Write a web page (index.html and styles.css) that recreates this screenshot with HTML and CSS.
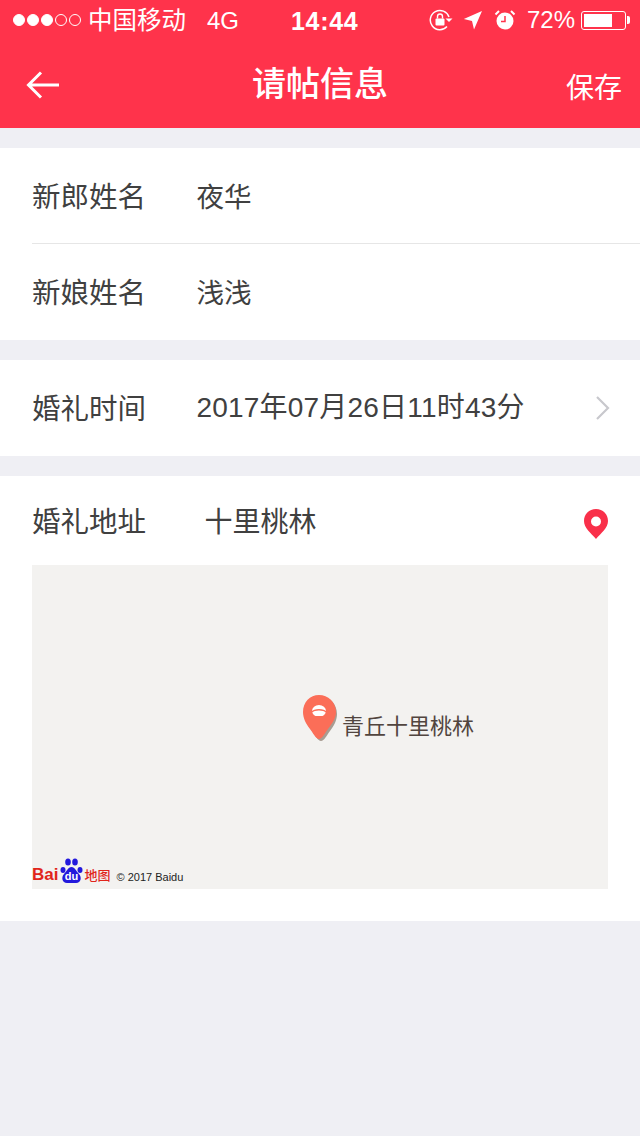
FILE: index.html
```html
<!DOCTYPE html>
<html lang="zh-CN">
<head>
    <meta charset="UTF-8">
    <meta name="viewport" content="width=device-width, initial-scale=1.0">
    <title>请帖信息</title>
    <link rel="stylesheet" href="styles.css">
</head>
<body>
    <header class="topbar">
        <div class="statusbar">
            <div class="status-left">
                <span class="signal">
                    <i class="dot on"></i><i class="dot on"></i><i class="dot on"></i><i class="dot"></i><i class="dot"></i>
                </span>
                <span class="carrier">中国移动</span>
                <span class="network">4G</span>
            </div>
            <div class="clock">14:44</div>
            <div class="status-right">
                <svg class="ico-lock" width="24" height="22" viewBox="0 0 24 22">
                    <path d="M18 17.5A9.6 9.6 0 1 1 20 8" fill="none" stroke="#fff" stroke-width="1.5"/>
                    <path d="M16.5 9.5h7L20 13z" fill="#fff"/>
                    <rect x="6.5" y="9.5" width="9" height="7" rx="1" fill="#fff"/>
                    <path d="M8.5 9.5V7.500a2.500 2.500 0 0 1 5 0v2" fill="none" stroke="#fff" stroke-width="1.400"/>
                </svg>
                <svg class="ico-loc" width="20" height="20" viewBox="0 0 20 20">
                    <path d="M19 1 11 19.500 9 11 .8 9z" fill="#fff"/>
                </svg>
                <svg class="ico-alarm" width="22" height="22" viewBox="0 0 22 22">
                    <circle cx="11" cy="12" r="8.500" fill="#fff"/>
                    <path d="M11 7v5.500H7" fill="none" stroke="#ff334b" stroke-width="1.500"/>
                    <path d="M1.500 5.500 5 2M20.500 5.500 17 2" stroke="#fff" stroke-width="2" fill="none"/>
                </svg>
                <span class="percent">72%</span>
                <span class="battery"><span class="battery-level"></span></span>
                <span class="battery-cap"></span>
            </div>
        </div>
        <nav class="navbar">
            <svg class="back" width="34" height="30" viewBox="0 0 34 30">
                <path d="M33 15H3M15 2.500 2.500 15 15 27.500" fill="none" stroke="#fff" stroke-width="3"/>
            </svg>
            <h1>请帖信息</h1>
            <span class="save">保存</span>
        </nav>
    </header>

    <section class="group">
        <div class="row line">
            <span class="label">新郎姓名</span>
            <span class="value">夜华</span>
        </div>
        <div class="row">
            <span class="label">新娘姓名</span>
            <span class="value">浅浅</span>
        </div>
    </section>

    <section class="group">
        <div class="row">
            <span class="label">婚礼时间</span>
            <span class="value date">2017年07月26日11时43分</span>
            <svg class="arrow" width="16" height="26" viewBox="0 0 16 26">
                <path d="M2 2l11 11L2 24" fill="none" stroke="#c8c8cd" stroke-width="2.200"/>
            </svg>
        </div>
    </section>

    <section class="group address">
        <div class="address-head">
            <span class="label">婚礼地址</span>
            <span class="value place">十里桃林</span>
            <svg class="pin" width="24" height="30" viewBox="0 0 24 30">
                <path fill-rule="evenodd" d="M12 0C5 0 0 5 0 12c0 7 7 12 12 18 5-6 12-11 12-18C24 5 19 0 12 0zm0 7.500a5 5 0 1 1 0 10 5 5 0 0 1 0-10z" fill="#f9304a"/>
            </svg>
        </div>
        <div class="map">
            <div class="marker">
                <svg width="36" height="46" viewBox="0 0 36 46">
                    <path d="M19 2C10 2 3 9 3 19c0 6 3 12 7 17 3 4 6 10 9 10s6-6 9-10c4-5 7-11 7-17C35 9 28 2 19 2z" fill="#a89c92"/>
                    <path d="M17 0C8 0 1 7 1 17c0 6 3 12 7 17 3 4 6 10 9 10s6-6 9-10c4-5 8-11 8-17C34 7 26 0 17 0z" fill="#fb6e58"/>
                    <ellipse cx="17" cy="16" rx="7" ry="6" fill="#fff"/>
                    <path d="M10 17a7.500 3.500 0 0 1 14 0" fill="none" stroke="#fb6e58" stroke-width="1.500"/>
                    <path d="M8 22h18v-3a9 2 0 0 1-18 0z" fill="#fb6e58"/>
                </svg>
                <span class="marker-name">青丘十里桃林</span>
            </div>
            <div class="map-logo">
                <span class="bai">Bai</span>
                <svg class="paw" width="26" height="27" viewBox="0 0 26 27">
                    <ellipse cx="5" cy="13" rx="2.500" ry="3" fill="#2319dc"/>
                    <ellipse cx="10" cy="5" rx="2.800" ry="3.500" fill="#2319dc"/>
                    <ellipse cx="17" cy="5" rx="2.800" ry="3.500" fill="#2319dc"/>
                    <ellipse cx="22" cy="13" rx="2.500" ry="3" fill="#2319dc"/>
                    <path d="M13.500 10C10 10 9 14 6 17c-3 3-2 9 3 9h9c5 0 6-6 3-9-3-3-4-7-7.500-7z" fill="#2319dc"/>
                    <text class="paw-du" x="13.500" y="23" text-anchor="middle">du</text>
                </svg>
                <span class="map-cn">地图</span>
                <span class="copyright">© 2017 Baidu</span>
            </div>
        </div>
    </section>
</body>
</html>
```

FILE: styles.css
```css
*{
    margin: 0;
    padding: 0;
    box-sizing: border-box;
}
html, body{
    height: 1136px;
    overflow: hidden;
}
body{
    background-color: #efeff4;
    font-family: "Noto Sans CJK SC", "Liberation Sans", sans-serif;
    color: #404040;
}

/* top bar */
.topbar{
    height: 128px;
    background-color: #ff334b;
    color: #fff;
}
.statusbar{
    height: 40px;
    position: relative;
    display: flex;
    justify-content: space-between;
    align-items: center;
    padding: 0 10px 0 13px;
}
.status-left, .status-right{
    display: flex;
    align-items: center;
}
.signal{
    display: flex;
    gap: 2px;
}
.dot{
    width: 12px;
    height: 12px;
    border-radius: 50%;
    border: 1px solid #fff;
}
.dot.on{
    background-color: #fff;
}
.carrier{
    font-size: 24.5px;
    margin-left: 7px;
    line-height: 28px;
    margin-bottom: 2px;
}
.network{
    font-family: "Liberation Sans", sans-serif;
    font-size: 24px;
    margin-left: 21px;
    margin-top: 2px;
}
.clock{
    position: absolute;
    left: 291px;
    top: 7px;
    font-family: "Liberation Sans", sans-serif;
    font-weight: bold;
    font-size: 25px;
    letter-spacing: 0.7px;
}
.ico-lock{
    margin-right: 10px;
}
.ico-loc{
    margin-right: 11px;
}
.ico-alarm{
    margin-right: 11px;
}
.percent{
    font-family: "Liberation Sans", sans-serif;
    font-size: 24px;
    margin-right: 6px;
}
.battery{
    width: 45px;
    height: 19px;
    border: 1px solid #fff;
    border-radius: 3px;
    padding: 2px;
}
.battery-level{
    display: block;
    width: 72%;
    height: 100%;
    background-color: #fff;
}
.battery-cap{
    width: 3px;
    height: 8px;
    margin-left: 1px;
    background-color: #fff;
    border-radius: 0 2px 2px 0;
}
.navbar{
    height: 88px;
    position: relative;
    display: flex;
    align-items: center;
    justify-content: space-between;
    padding: 0 18px 0 26px;
}
.navbar h1{
    position: absolute;
    left: 0;
    right: 0;
    top: -2px;
    text-align: center;
    font-size: 34px;
    font-weight: 500;
    line-height: 88px;
}
.save{
    font-size: 28px;
    margin-top: 3px;
}
.back{
    margin-top: 1px;
}

/* form groups */
.group{
    margin-top: 20px;
    background-color: #fff;
    padding-left: 32px;
}
.row{
    height: 96px;
    display: flex;
    align-items: center;
    position: relative;
    padding-right: 29px;
    padding-bottom: 2px;
}
.line{
    border-bottom: 1px solid #e6e6e6;
}
.label{
    width: 164.5px;
    flex-shrink: 0;
    font-size: 28.5px;
    line-height: 38px;
}
.value{
    font-size: 27.6px;
    line-height: 38px;
}
.date{
    flex: 1;
    font-family: "Liberation Sans", "Noto Sans CJK SC", sans-serif;
    font-size: 28px;
    letter-spacing: 0.2px;
    line-height: 40px;
    margin-top: 2px;
}
.arrow{
    margin-top: 2px;
}

/* address */
.address{
    height: 445px;
    padding-right: 32px;
}
.address-head{
    height: 89px;
    display: flex;
    align-items: flex-start;
    padding-top: 25px;
}
.place{
    flex: 1;
    margin-left: 8px;
    font-size: 28px;
}
.pin{
    margin-top: 8px;
}
.map{
    height: 324px;
    background-color: #f3f2f0;
    position: relative;
}
.marker{
    position: absolute;
    left: 270px;
    top: 130px;
    display: flex;
    align-items: center;
}
.marker-name{
    font-size: 22px;
    color: #51453f;
    margin-left: 4px;
    margin-top: 12px;
    white-space: nowrap;
}
.map-logo{
    position: absolute;
    left: 0;
    bottom: 5px;
    display: flex;
    align-items: flex-end;
}
.bai{
    font-family: "Liberation Sans", sans-serif;
    font-weight: bold;
    font-size: 17px;
    line-height: 18px;
    color: #e1251b;
}
.paw{
    margin-left: 0;
}
.paw-du{
    font-family: "Liberation Sans", sans-serif;
    font-weight: bold;
    font-size: 11px;
    fill: #fff;
}
.map-cn{
    font-size: 13px;
    line-height: 18px;
    font-weight: 500;
    color: #e1251b;
    margin-left: 0;
}
.copyright{
    font-family: "Liberation Sans", sans-serif;
    font-size: 11px;
    line-height: 16px;
    color: #222;
    margin-left: 6px;
    margin-bottom: -1px;
}
```
